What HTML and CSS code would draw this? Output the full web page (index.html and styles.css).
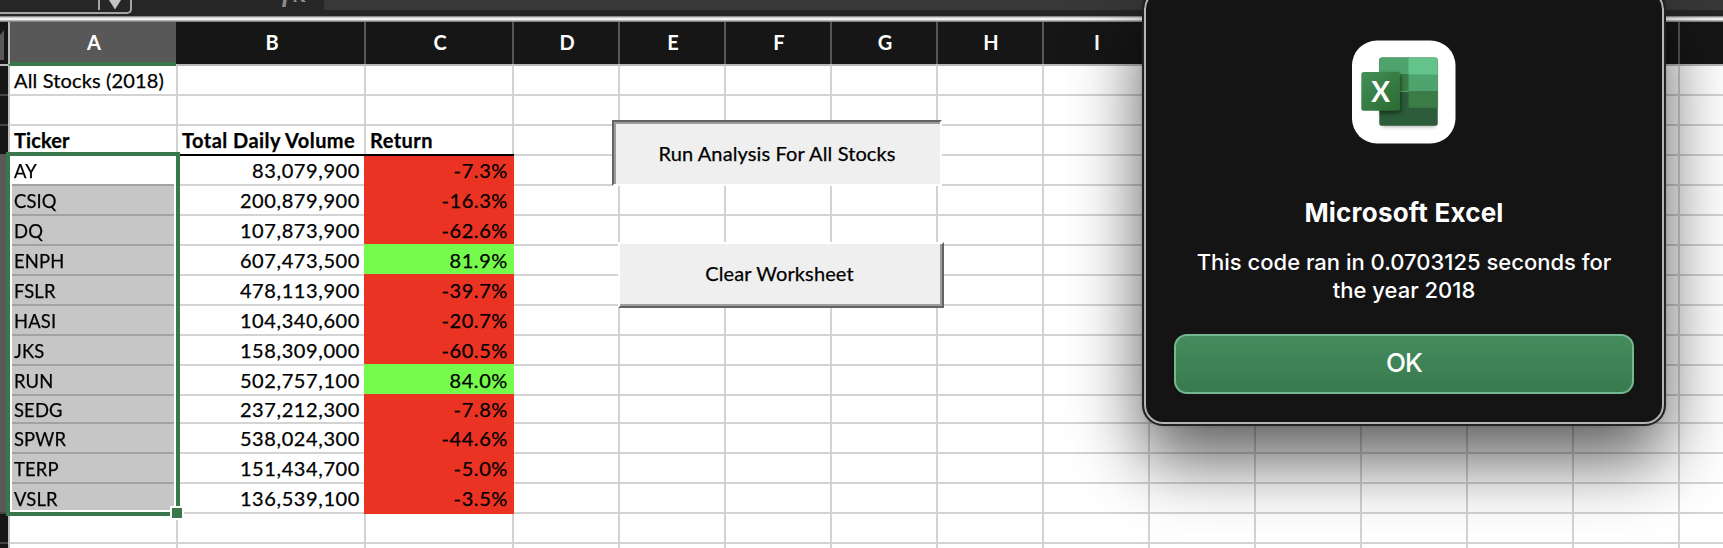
FILE: index.html
```
<!DOCTYPE html>
<html lang="en">
<head>
<meta charset="utf-8">
<title>All Stocks (2018)</title>
<link rel="stylesheet" href="styles.css">
</head>
<body>
<div class="app">
  <div class="formula-bar">
    <div class="name-box"><svg class="caret" width="12" height="10" viewBox="0 0 12 10"><path d="M0 0H12L6 9.500Z"/></svg></div>
    <div class="fx-area"><span class="fx">fx</span></div>
    <div class="formula-input"></div>
  </div>
  <div class="divider"></div>
  <div class="sheet" id="sheet"></div>

  <div class="selection"><span class="handle"></span></div>
  <div class="form-button pressed"><span class="t-run">Run Analysis For All Stocks</span></div>
  <div class="form-button raised"><span class="t-clear">Clear Worksheet</span></div>

  <div class="dialog">
    <svg class="app-icon" width="112" height="112" viewBox="0 0 112 112">
      <defs>
        <linearGradient id="tile" x1="0" y1="0" x2="1" y2="1"><stop offset="0" stop-color="#439056"/><stop offset="1" stop-color="#2a6a32"/></linearGradient>
        <clipPath id="book"><rect x="31.300" y="21.500" width="58.400" height="68.300" rx="2.500"/></clipPath>
        <filter id="soft" x="-30%" y="-30%" width="160%" height="160%"><feGaussianBlur stdDeviation="2"/></filter>
      </defs>
      <rect class="plate" x="4" y="4.500" width="103.500" height="103" rx="25"/>
      <rect x="33" y="25" width="55" height="65.500" rx="3" fill="#000" opacity=".35" filter="url(#soft)"/>
      <g clip-path="url(#book)">
        <rect x="31" y="21" width="60" height="70" fill="#2c5c3a"/>
        <rect x="31" y="21" width="30" height="35" fill="#4fa36c"/>
        <rect x="31" y="38" width="30" height="17" fill="#3a7b46"/>
        <rect x="60.500" y="21" width="30" height="18" fill="#63c389"/>
        <rect x="60.500" y="38.500" width="30" height="17" fill="#4fa36c"/>
        <rect x="60.500" y="55.300" width="30" height="16.500" fill="#3a7b46"/>
        <rect x="15" y="38" width="38" height="39" rx="3" fill="#000" opacity=".5" filter="url(#soft)"/>
      </g>
      <rect x="13.300" y="36" width="38.700" height="38.700" rx="2.500" fill="url(#tile)"/>
      <text class="x-mark" x="32.700" y="65.800" text-anchor="middle">X</text>
    </svg>
    <div class="title"><span>Microsoft Excel</span></div>
    <div class="message"><span>This code ran in 0.0703125 seconds for</span><br><span>the year 2018</span></div>
    <div class="ok"><span>OK</span></div>
  </div>
</div>
<script src="sheet.js"></script>
</body>
</html>
```
FILE: styles.css
```
body { margin: 0; background: #fff; }
.app { position: relative; width: 1723px; height: 548px; overflow: hidden; display: flex; flex-direction: column; font-family: Lato, Carlito, sans-serif; color: #000; }

.formula-bar { flex: none; height: 16px; display: flex; background: #262626; }
.name-box { box-sizing: border-box; width: 132px; height: 14px; border: solid #a5a5a5; border-width: 0 2px 2px 0; border-radius: 0 0 5px 0; display: flex; justify-content: flex-end; }
.caret { box-sizing: content-box; padding: 0 9px; height: 10px; border-left: 2px solid #a5a5a5; fill: #c4c4c4; }
.fx-area { width: 192px; height: 16px; }
.fx { display: block; margin: -18px 0 0 150px; font: italic bold 26px/24px "Liberation Serif", serif; letter-spacing: 3px; color: #8c8c8c; }
.formula-input { flex: 1; height: 10px; background: #383838; }
.divider { flex: none; height: 6px; background: linear-gradient(#8c8c8c 0 1px, #c8c8c8 1px 2px, #f2f2f2 2px 4px, #b4b4b4 4px 5px, #858585 5px 6px); }

.sheet { flex: none; display: grid; grid-template-columns: 8px 168px 188px 148px repeat(11, 106px) 60px; grid-template-rows: 42px repeat(11, 30px) 28px repeat(5, 30px); }
.col { display: flex; align-items: center; justify-content: center; box-sizing: border-box; border-left: 2px solid #565656; padding: 0 0 2px 2px; background: #161616; color: #fff; font-size: 20px; font-weight: 700; }
.col.a { background: #585858; border-left-color: #b8b8b8; box-shadow: inset 0 -2px #3a774c; }
.col.b { border-left-color: #161616; }
.corner { background: #161616; overflow: hidden; }
.corner svg { display: block; fill: #595959; }
.row { box-sizing: border-box; border-top: 2px solid #454545; background: #161616; }
.row.on { background: #595959; border-color: #595959; }
.row.first { border-top-color: #b8b8b8; }
.cell { box-sizing: border-box; border-top: 2px solid #d3d3d3; border-left: 2px solid #d3d3d3; padding: 0 4px; font-size: 20px; line-height: 29px; letter-spacing: .15px; white-space: nowrap; -webkit-text-stroke: .25px; }
.cell span { display: inline-block; }
.cell.top { border-top-color: #b8b8b8; }
.cell.left { border-left-color: #bdbdbd; }
.cell.under-green { border-top-color: #3a774c; }
.cell.bold { font-weight: 700; letter-spacing: .45px; }
.cell.bold.h0 { letter-spacing: .1px; }
.cell.num { text-align: right; letter-spacing: .6px; }
.cell.ticker span { transform: scaleX(.92); transform-origin: 0 50%; }
.cell.short { line-height: 26px; }
.cell.ruled { border-top-color: #000; }
.cell.sel { background: #c6c6c6; border-top-color: #a2a2a2; }
.cell.fill { margin-right: -2px; position: relative; padding-right: 6px; border: 0; padding-top: 2px; }
.cell.fill.ruled { border-top: 2px solid #000; padding-top: 0; }
.cell.fill.last { margin-bottom: -2px; }
.neg { background: #ea3323; }
.pos { background: #75fb4c; }

.selection { position: absolute; left: 6px; top: 152px; width: 166px; height: 356px; border: 4px solid #3a774c; box-shadow: inset 0 0 0 2px #fff; }
.handle { position: absolute; right: -6px; bottom: -6px; width: 10px; height: 10px; background: #3a774c; outline: 2px solid #fff; }

.form-button { position: absolute; box-sizing: border-box; display: flex; align-items: center; justify-content: center; background: #efefef; font-size: 20px; letter-spacing: .12px; white-space: nowrap; -webkit-text-stroke: .25px; }
.pressed { left: 612px; top: 120px; width: 330px; height: 66px; padding-bottom: 1px; border: 2px solid; border-color: #636363 #fff #fff #636363; box-shadow: inset 2px 2px #9d9d9d; }
.raised { left: 618px; top: 242px; width: 326px; height: 66px; padding: 0 3px 4px 0; border: 2px solid; border-color: #fff #636363 #636363 #fff; box-shadow: inset -2px -2px #9d9d9d; }

.dialog { position: absolute; left: 1144px; top: -10px; width: 520px; height: 434px; box-sizing: border-box; border: 2px solid #b5b5b5; border-radius: 19px; background: #141414; outline: 2px solid #222; box-shadow: 0 0 4px rgba(0,0,0,.4), 0 34px 70px 2px rgba(0,0,0,.64); display: flex; flex-direction: column; align-items: center; color: #fff; font-family: Inter, sans-serif; text-align: center; }
.app-icon { flex: none; margin-top: 44px; }
.plate { fill: #fff; }
.x-mark { font: 700 28px Lato, sans-serif; fill: #fff; }
.title { margin-top: 49px; font-size: 26px; line-height: 32px; letter-spacing: .2px; font-weight: 700; white-space: nowrap; }
.message { margin-top: 19px; font-size: 22px; line-height: 28px; font-weight: 500; white-space: nowrap; }
.ok { box-sizing: border-box; margin-top: 30px; width: 460px; height: 60px; padding-bottom: 3px; border: 2px solid #76b792; border-radius: 13px; background: linear-gradient(#448c5d, #397a4e); display: flex; align-items: center; justify-content: center; font-size: 26px; letter-spacing: -.8px; font-weight: 500; }
```
FILE: sheet.js
```
const stocks = [
  ["AY", "83,079,900", "-7.3%"], ["CSIQ", "200,879,900", "-16.3%"],
  ["DQ", "107,873,900", "-62.6%"], ["ENPH", "607,473,500", "81.9%"],
  ["FSLR", "478,113,900", "-39.7%"], ["HASI", "104,340,600", "-20.7%"],
  ["JKS", "158,309,000", "-60.5%"], ["RUN", "502,757,100", "84.0%"],
  ["SEDG", "237,212,300", "-7.8%"], ["SPWR", "538,024,300", "-44.6%"],
  ["TERP", "151,434,700", "-5.0%"], ["VSLR", "136,539,100", "-3.5%"]
];
const sheet = document.getElementById("sheet");
function add(cls, text) {
  const el = document.createElement("div");
  el.className = cls;
  if (text) {
    const span = document.createElement("span");
    span.textContent = text;
    el.append(span);
  }
  sheet.append(el);
  return el;
}
add("corner").innerHTML = '<svg width="8" height="42" viewBox="0 0 8 42"><path d="M0 13L4 8V38H0Z"/></svg>';
"ABCDEFGHIJKLMNO".split("").forEach(c => add("col " + c.toLowerCase(), c === "O" ? "" : c));
for (let r = 1; r <= 17; r++) {
  const s = stocks[r - 4];
  add("row" + (s ? " on" : "") + (r === 1 ? " first" : ""));
  for (let c = 0; c < 15; c++) {
    let cls = "cell", text = "";
    if (c === 0) cls += " left";
    if (r === 1) cls += c === 0 ? " under-green" : " top";
    if (r === 1 && c === 0) text = "All Stocks (2018)";
    if (r === 3 && c < 3) { text = ["Ticker", "Total Daily Volume", "Return"][c]; cls += " bold h" + c; }
    if (r === 4 && c < 3) cls += " ruled";
    if (r === 12) cls += " short";
    if (s && c < 3) {
      text = s[c];
      if (c === 0) cls += " ticker" + (r > 4 ? " sel" : "");
      else cls += " num";
      if (c === 2) cls += " fill " + (text[0] === "-" ? "neg" : "pos") + (r === 15 ? " last" : "");
    }
    add(cls, text);
  }
}
```
